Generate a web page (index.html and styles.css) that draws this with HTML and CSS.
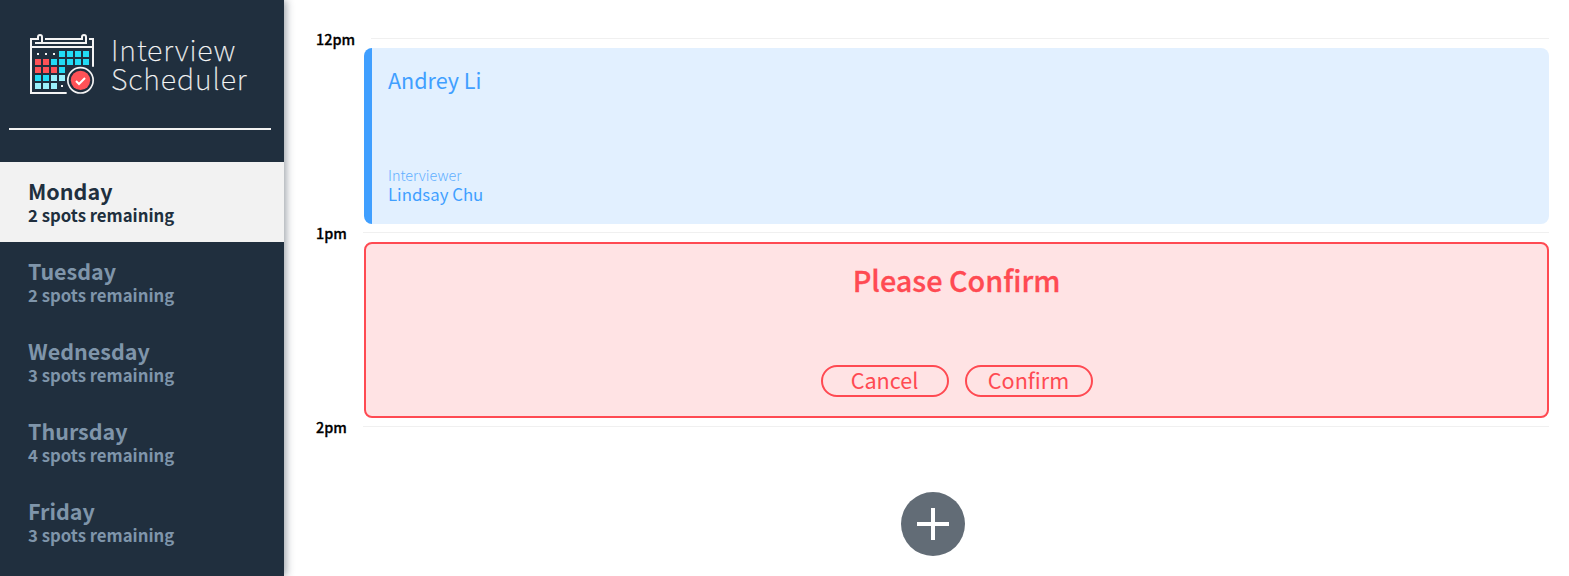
FILE: index.html
```html
<!DOCTYPE html>
<html lang="en">
<head>
<meta charset="utf-8">
<title>Interview Scheduler</title>
<link rel="stylesheet" href="styles.css">
</head>
<body>
<main class="layout">
  <aside class="sidebar">
    <header class="brand">
      <svg class="brand__icon" viewBox="0 0 270 240" aria-hidden="true">
        <g fill="none" stroke="#f4f4f4" stroke-width="6">
          <path d="M140 204H33V42H57M75 42H189M207 42H219V125"/>
          <path d="M33 66H219"/>
          <path d="M45 54H66V36Q66 30 60 30Q54 30 54 36V42M66 54H198V36Q198 30 192 30Q186 30 186 36V42"/>
        </g>
        <g fill="#f4f4f4"><path d="M51 84h6v6h-6zM75 84h6v6h-6zM99 84h6v6h-6zM123 180h6v6h-6z"/></g>
        <path fill="#22dcf5" d="M117 78h18v18h-18zM141 78h18v18h-18zM165 78h18v18h-18zM189 78h18v18h-18zM93 102h18v18h-18zM117 102h18v18h-18zM141 102h18v18h-18zM165 102h18v18h-18zM189 102h18v18h-18zM117 126h18v18h-18zM45 150h18v18h-18zM69 150h18v18h-18z"/>
        <path fill="#ff5257" d="M45 102h18v18h-18zM69 102h18v18h-18zM45 126h18v18h-18zM69 126h18v18h-18zM93 126h18v18h-18z"/>
        <path fill="#9bf1fc" d="M93 150h18v18h-18zM117 150h18v18h-18zM45 174h18v18h-18zM69 174h18v18h-18zM93 174h18v18h-18z"/>
        <circle cx="181.500" cy="166" r="38" fill="#202f3e" stroke="#f4f4f4" stroke-width="5"/>
        <circle cx="181.500" cy="166" r="29" fill="#ff5257"/>
        <path d="M168 168L177 177L195 159" fill="none" stroke="#fff" stroke-width="6"/>
      </svg>
      <h1 class="brand__name">Interview<br>Scheduler</h1>
    </header>
    <hr class="sidebar__separator">
    <ul class="days">
      <li class="day day--selected"><h2 class="day__name">Monday</h2><p class="day__spots">2 spots remaining</p></li>
      <li class="day"><h2 class="day__name">Tuesday</h2><p class="day__spots">2 spots remaining</p></li>
      <li class="day"><h2 class="day__name">Wednesday</h2><p class="day__spots">3 spots remaining</p></li>
      <li class="day"><h2 class="day__name">Thursday</h2><p class="day__spots">4 spots remaining</p></li>
      <li class="day"><h2 class="day__name">Friday</h2><p class="day__spots">3 spots remaining</p></li>
    </ul>
  </aside>
  <section class="schedule">
    <article class="slot">
      <header class="slot__time"><h4 class="slot__label slot__label--wide">12pm</h4><hr class="slot__line"></header>
      <div class="card card--booked">
        <h2 class="card__student">Andrey Li</h2>
        <div>
          <h4 class="card__role">Interviewer</h4>
          <h3 class="card__interviewer">Lindsay Chu</h3>
        </div>
      </div>
    </article>
    <article class="slot">
      <header class="slot__time"><h4 class="slot__label">1pm</h4><hr class="slot__line"></header>
      <div class="card card--confirm">
        <h1 class="card__question">Please Confirm</h1>
        <div class="card__actions">
          <button class="button">Cancel</button>
          <button class="button">Confirm</button>
        </div>
      </div>
    </article>
    <article class="slot slot--last">
      <header class="slot__time"><h4 class="slot__label">2pm</h4><hr class="slot__line"></header>
      <div class="add">
        <svg class="add__button" viewBox="0 0 64 64" role="img" aria-label="Add">
          <circle cx="32" cy="32" r="32" fill="#626c76"/>
          <path d="M16 32H48M32 16V48" stroke="#fff" stroke-width="4"/>
        </svg>
      </div>
    </article>
  </section>
</main>
</body>
</html>
```
FILE: styles.css
```css
* { box-sizing: border-box; margin: 0; padding: 0; }

body {
  height: 576px;
  overflow: hidden;
  background: #fff;
  color: #000;
  font-family: "Noto Sans CJK SC", "Noto Sans", sans-serif;
}

.layout { display: flex; height: 576px; }

.sidebar {
  flex: 0 0 284px;
  background: #202f3e;
  box-shadow: 2px 0 8px rgba(34, 47, 62, 0.45);
}

.brand { display: flex; height: 128px; padding: 25px 0 0 20px; }
.brand__icon { flex: none; width: 90px; height: 80px; }
.brand__name {
  padding: 9px 0 0 1px;
  color: #f4f4f4;
  font-size: 28.800px;
  font-weight: 100;
  line-height: 29px;
  letter-spacing: 0.900px;
  -webkit-text-stroke: 0.250px #f4f4f4;
}

.sidebar__separator { width: 262px; height: 2px; margin: 0 0 32px 9px; border: 0; background: #f2f2f2; }

.days { list-style: none; }
.day { height: 80px; padding: 17px 28px 0; color: #7f95aa; }
.day--selected { background: #f2f2f2; color: #202f3e; }
.day__name { font-size: 21.500px; font-weight: 700; line-height: 24px; }
.day__spots { font-size: 16.750px; font-weight: 700; line-height: 24px; }

.schedule { flex: 1; padding: 30px 20px 0 32px; }
.slot { height: 194px; }
.slot--last { height: 152px; }
.slot__time { display: flex; height: 18px; }
.slot__label { flex: 0 0 47px; font-size: 14.400px; font-weight: 500; line-height: 18px; -webkit-text-stroke: 0.300px #000; }
.slot__label--wide { flex-basis: 55px; }
.slot__line { flex: 1; height: 1px; margin-top: 8px; border: 0; background: #f0f0f0; }

.card { display: flex; flex-direction: column; justify-content: space-between; height: 176px; margin-left: 48px; border-radius: 8px; }
.card--booked { padding: 18px 16px 20px; border-left: 8px solid #409fff; background: #e2f0ff; color: #409fff; }
.card__student { font-size: 21.550px; font-weight: 400; line-height: 28px; }
.card__role { font-size: 14.400px; font-weight: 300; line-height: 18px; opacity: 0.800; }
.card__interviewer { font-size: 16.800px; font-weight: 400; line-height: 20px; }

.card--confirm { align-items: center; padding: 16px 0 19px; border: 2px solid #ff4a52; background: #ffe3e4; color: #ff4a52; }
.card__question { font-size: 28.800px; font-weight: 500; line-height: 40px; -webkit-text-stroke: 0.300px #ff4a52; }
.card__actions { display: flex; gap: 16px; }
.button {
  width: 128px;
  height: 32px;
  padding-bottom: 2px;
  border: 2px solid #ff4a52;
  border-radius: 16px;
  background: transparent;
  color: #ff4a52;
  font: 400 21.600px/26px "Noto Sans CJK SC", "Noto Sans", sans-serif;
}

.add { display: flex; justify-content: center; padding-top: 56px; }
.add__button { width: 64px; height: 64px; }
```
